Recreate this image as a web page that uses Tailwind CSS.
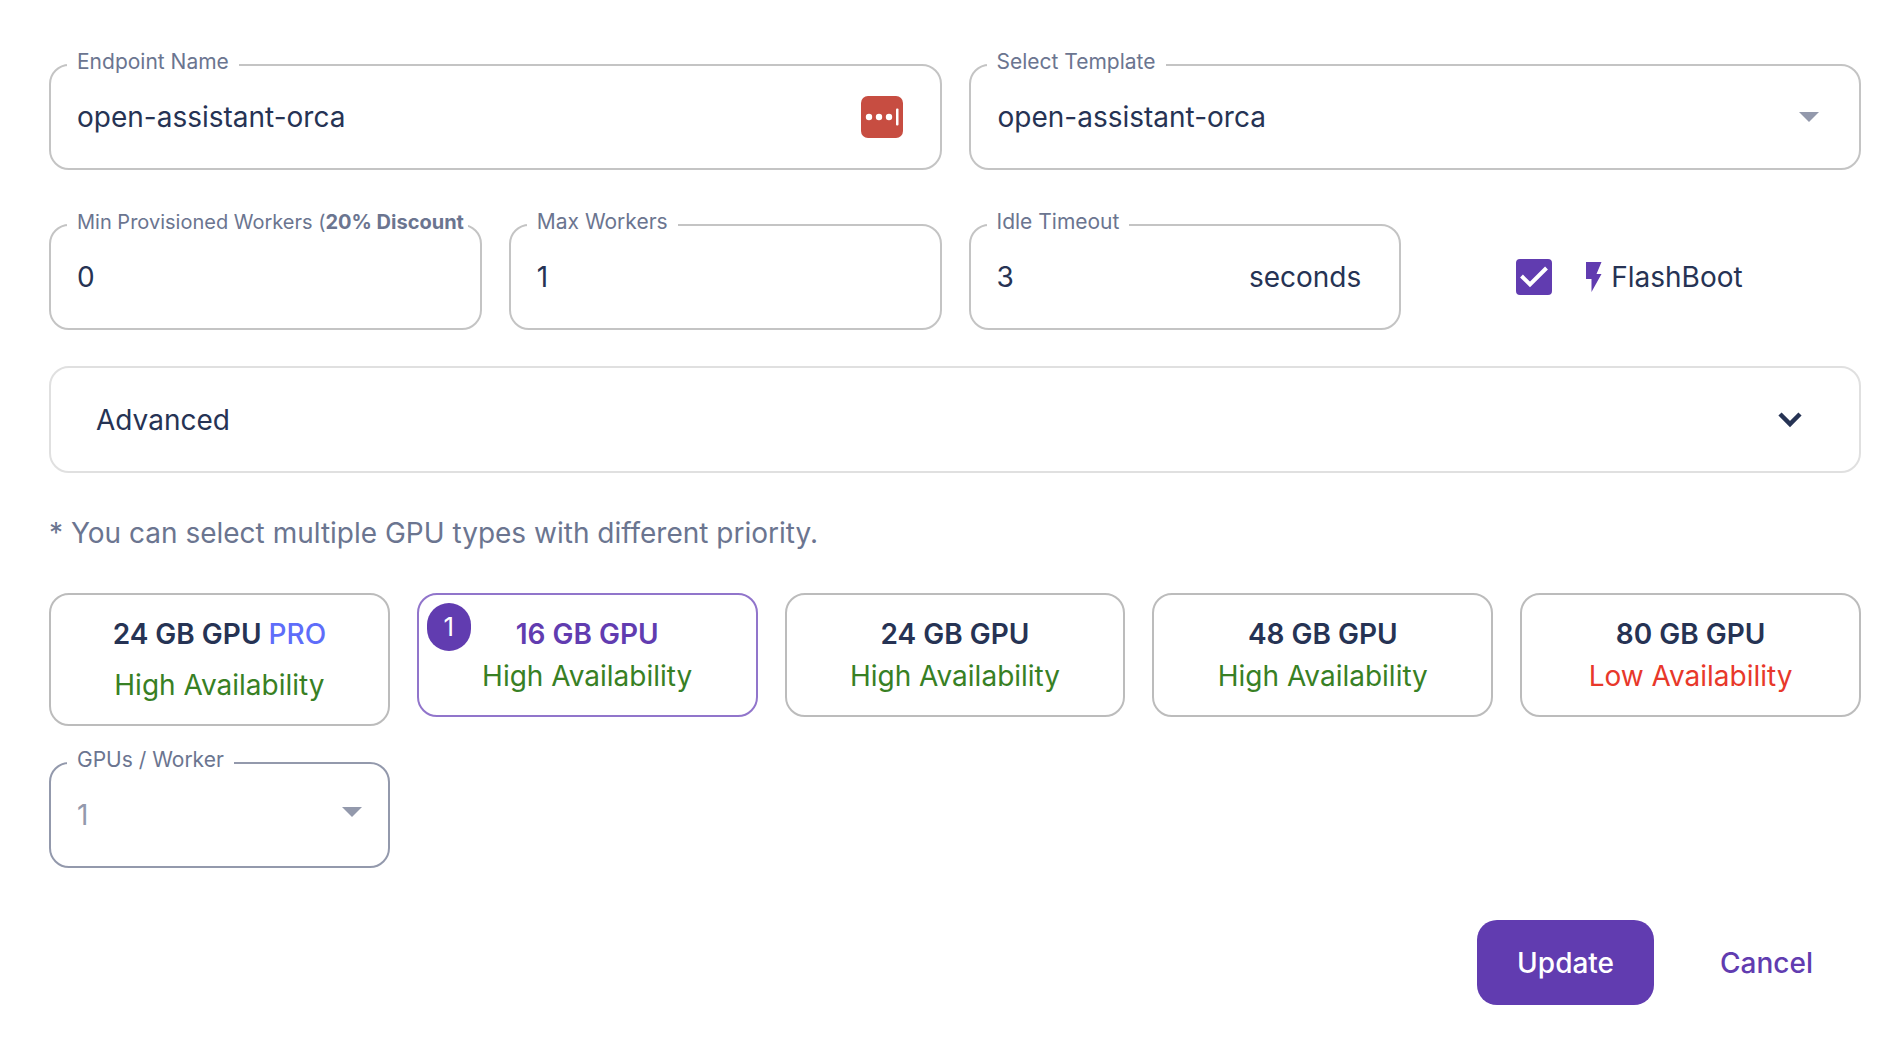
<!DOCTYPE html>
<html lang="en">
<head>
<meta charset="utf-8">
<meta name="viewport" content="width=device-width, initial-scale=1">
<title>Edit Endpoint</title>
<script src="https://cdn.jsdelivr.net/npm/@tailwindcss/browser@4"></script>
</head>
<body class="bg-white font-['Inter',sans-serif] text-[28px] text-[#263354]">
<form class="pt-[50px] pb-[34px] pl-[49px] pr-[43px]">
  <div class="grid grid-cols-2 gap-[27px]">
    <fieldset class="min-w-0 rounded-[20px] border-2 border-[#c4c4c4] pb-[14px] pl-4 pr-2">
      <legend class="px-[10px] pb-[6px] text-[21px] leading-[24px] text-[#6b7590]"><label for="name">Endpoint Name</label></legend>
      <div class="flex items-center pl-[10px] pr-[29px]">
        <input id="name" type="text" value="open-assistant-orca" class="h-[74px] min-w-0 flex-1 bg-transparent outline-none">
        <svg class="size-[42px]" viewBox="0 0 42 42" aria-hidden="true"><rect width="42" height="42" rx="7" fill="#c74d41"/><g fill="#fff"><circle cx="8" cy="21" r="3.2"/><circle cx="18" cy="21" r="3.2"/><circle cx="28" cy="21" r="3.2"/><rect x="35" y="12.500" width="2.500" height="17" rx="1"/></g></svg>
      </div>
    </fieldset>
    <fieldset class="min-w-0 rounded-[20px] border-2 border-[#c4c4c4] pb-[14px] pl-4 pr-2">
      <legend class="px-[10px] pb-[6px] text-[21px] leading-[24px] text-[#6b7590]"><label for="template">Select Template</label></legend>
      <div class="flex items-center pl-[11px] pr-[32px]">
        <select id="template" class="h-[74px] min-w-0 flex-1 appearance-none bg-transparent outline-none"><option>open-assistant-orca</option></select>
        <svg class="h-[10px] w-5" viewBox="0 0 20 10" aria-hidden="true"><path d="M0 0h20L10 10z" fill="#9399ac"/></svg>
      </div>
    </fieldset>
  </div>

  <div class="mt-10 grid grid-cols-4 gap-[27px]">
    <fieldset class="min-w-0 rounded-[20px] border-2 border-[#c4c4c4] pb-[14px] pl-4 pr-3">
      <legend class="w-full overflow-hidden whitespace-nowrap pb-[6px] pl-[10px] text-[20px] leading-[24px] text-[#6b7590]"><label for="min">Min Provisioned Workers (<b>20% Discount</b></label></legend>
      <div class="flex px-[10px]"><input id="min" type="text" inputmode="numeric" value="0" class="h-[74px] min-w-0 flex-1 bg-transparent outline-none"></div>
    </fieldset>
    <fieldset class="min-w-0 rounded-[20px] border-2 border-[#c4c4c4] pb-[14px] pl-4 pr-2">
      <legend class="px-[10px] pb-[6px] text-[21px] leading-[24px] text-[#6b7590]"><label for="max">Max Workers</label></legend>
      <div class="flex px-[10px]"><input id="max" type="text" inputmode="numeric" value="1" class="h-[74px] min-w-0 flex-1 bg-transparent outline-none"></div>
    </fieldset>
    <fieldset class="min-w-0 rounded-[20px] border-2 border-[#c4c4c4] pb-[14px] pl-4 pr-2">
      <legend class="px-[10px] pb-[6px] text-[21px] leading-[24px] text-[#6b7590]"><label for="idle">Idle Timeout</label></legend>
      <div class="flex items-center pl-[10px] pr-[30px]">
        <input id="idle" type="text" inputmode="numeric" value="3" class="h-[74px] min-w-0 flex-1 bg-transparent outline-none">
        <span>seconds</span>
      </div>
    </fieldset>
    <div class="flex items-center pl-[88px] pt-[14px]">
      <span class="relative flex size-9">
        <input id="flash" type="checkbox" checked class="size-9 appearance-none rounded-[4px] border-2 border-[#613cb0] checked:bg-[#613cb0]">
        <svg class="pointer-events-none absolute inset-0 size-9" viewBox="0 0 36 36" aria-hidden="true"><path d="M5.500 17L14 25.500L30.500 9" fill="none" stroke="#fff" stroke-width="4"/></svg>
      </span>
      <label for="flash" class="flex items-center gap-[9px] pl-[34px]">
        <svg class="h-[30px] w-4" viewBox="0 0 16 30" aria-hidden="true"><path d="M0 0h15.500L10.500 12H15.500L5.500 30V17H0z" fill="#613cb0"/></svg>
        FlashBoot
      </label>
    </div>
  </div>

  <button type="button" aria-expanded="false" class="mt-9 flex h-[107px] w-full items-center justify-between rounded-[20px] border-2 border-[#e0e0e0] pl-[45px] pr-[57px]">
    Advanced
    <svg class="h-4 w-6" viewBox="0 0 24 16" aria-hidden="true"><path d="M2 2l10 10L22 2" fill="none" stroke="#263354" stroke-width="4.500"/></svg>
  </button>

  <p class="mb-[38px] mt-[38px] leading-[44px] text-[#6b7590]">* You can select multiple GPU types with different priority.</p>

  <div class="grid grid-cols-5 items-start gap-x-[27px] gap-y-[22px] leading-[42px]">
    <button type="button" class="rounded-[20px] border-2 border-[#bcbcbc] py-[18px]">
      <span class="block font-semibold">24 GB GPU <span class="font-medium text-[#5e6dfa]">PRO</span></span>
      <span class="mt-[9px] block text-[#388024]">High Availability</span>
    </button>
    <button type="button" aria-pressed="true" class="relative rounded-[20px] border-2 border-[#9175cb] py-[18px]">
      <span class="absolute left-2 top-2 flex h-12 w-11 items-center justify-center rounded-full bg-[#613cb0] text-[26px] text-white">1</span>
      <span class="block font-semibold text-[#613cb0]">16 GB GPU</span>
      <span class="block text-[#388024]">High Availability</span>
    </button>
    <button type="button" class="rounded-[20px] border-2 border-[#bcbcbc] py-[18px]">
      <span class="block font-semibold">24 GB GPU</span>
      <span class="block text-[#388024]">High Availability</span>
    </button>
    <button type="button" class="rounded-[20px] border-2 border-[#bcbcbc] py-[18px]">
      <span class="block font-semibold">48 GB GPU</span>
      <span class="block text-[#388024]">High Availability</span>
    </button>
    <button type="button" class="rounded-[20px] border-2 border-[#bcbcbc] py-[18px]">
      <span class="block font-semibold">80 GB GPU</span>
      <span class="block text-[#e8382a]">Low Availability</span>
    </button>
    <fieldset class="min-w-0 rounded-[20px] border-2 border-[#9399ac] pb-[14px] pl-4 pr-2">
      <legend class="px-[10px] pb-[6px] text-[21px] leading-[24px] text-[#6b7590]"><label for="gpus">GPUs / Worker</label></legend>
      <div class="flex items-center pl-[10px] pr-[18px]">
        <select id="gpus" disabled class="h-[74px] min-w-0 flex-1 appearance-none bg-transparent text-[#9399ac] opacity-100 outline-none"><option>1</option></select>
        <svg class="mb-[6px] h-[10px] w-5" viewBox="0 0 20 10" aria-hidden="true"><path d="M0 0h20L10 10z" fill="#9399ac"/></svg>
      </div>
    </fieldset>
  </div>

  <div class="mt-[52px] flex justify-end gap-[18px] font-medium">
    <button type="submit" class="h-[85px] rounded-[20px] bg-[#613cb0] px-10 text-white">Update</button>
    <button type="button" class="h-[85px] rounded-[20px] px-12 text-[#613cb0]">Cancel</button>
  </div>
</form>
</body>
</html>
